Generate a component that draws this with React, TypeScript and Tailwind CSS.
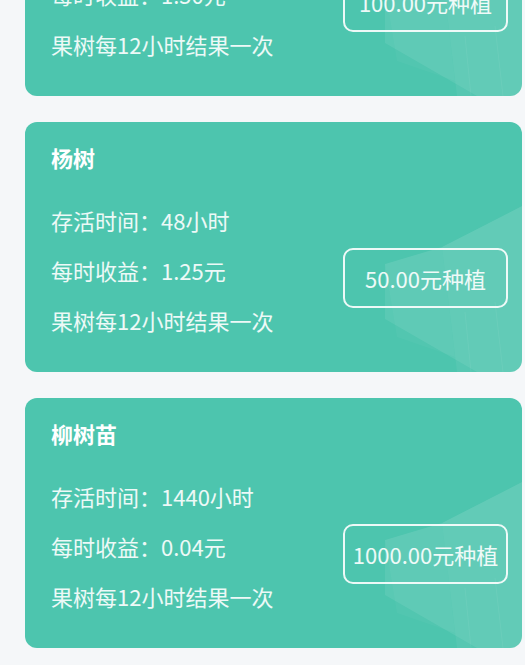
const trees = [
  { name: '桃树', life: '72小时', income: '1.50元', price: '100.00' },
  { name: '杨树', life: '48小时', income: '1.25元', price: '50.00' },
  { name: '柳树苗', life: '1440小时', income: '0.04元', price: '1000.00' },
];

function Facets() {
  return (
    <svg
      className="absolute inset-0 pointer-events-none"
      width="497"
      height="250"
      viewBox="0 0 497 250"
    >
      <polygon points="497,84 417,125 360,142 360,197 452,250 497,250" fill="#ffffff" fillOpacity="0.08" />
      <polygon points="497,84 417,125 432,250 497,250" fill="#ffffff" fillOpacity="0.05" />
      <polygon points="417,125 360,142 372,215 430,235" fill="#ffffff" fillOpacity="0.03" />
      <line x1="440" y1="190" x2="446" y2="250" stroke="#ffffff" strokeOpacity="0.06" />
      <line x1="470" y1="180" x2="478" y2="250" stroke="#ffffff" strokeOpacity="0.06" />
    </svg>
  );
}

function TreeCard({ name, life, income, price }: { name: string; life: string; income: string; price: string }) {
  return (
    <div className="relative flex justify-between w-[497px] h-[250px] rounded-[12px] bg-[#4dc5ae] overflow-hidden">
      <Facets />
      <div className="relative pl-[26px] pt-[23px]">
        <div className="text-[22px] leading-[24px] font-bold text-white">{name}</div>
        <div className="mt-[26px] text-[22px] leading-[50px] text-white/90">
          <div>存活时间：{life}</div>
          <div>每时收益：{income}</div>
          <div>果树每12小时结果一次</div>
        </div>
      </div>
      <button className="relative mt-[126px] mr-[14px] w-[165px] h-[60px] border-2 border-white/90 rounded-[10px] text-[22px] text-white/90 flex items-center justify-center">
        {price}元种植
      </button>
    </div>
  );
}

export default function App() {
  return (
    <div
      className="w-[525px] h-[665px] overflow-hidden bg-[#f5f7f9]"
      style={{ fontFamily: '"Noto Sans CJK SC", "Noto Sans", sans-serif' }}
    >
      <div className="flex flex-col gap-[26px] ml-[25px] mt-[-154px]">
        {trees.map((t) => (
          <TreeCard key={t.name} {...t} />
        ))}
      </div>
    </div>
  );
}
